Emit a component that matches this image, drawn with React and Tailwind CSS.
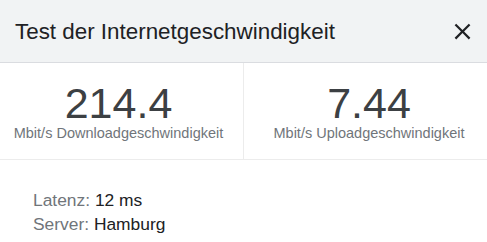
export default function App() {
  return (
    <div
      className="w-[487px] h-[242px] bg-white overflow-hidden"
      style={{ fontFamily: '"Liberation Sans", Arial, sans-serif' }}
    >
      <header className="h-[63px] flex items-center justify-between bg-[#f1f3f4] border-b border-[#dadce0] pl-[15px] pr-[5px]">
        <h1 className="text-[22.4px] leading-none text-[#202124] mt-[2px]">
          Test der Internetgeschwindigkeit
        </h1>
        <button className="w-[40px] h-[40px] flex items-center justify-center text-[#202124]">
          <svg width="27" height="27" viewBox="0 0 24 24" fill="currentColor">
            <path d="M19 6.41L17.59 5 12 10.59 6.41 5 5 6.41 10.59 12 5 17.59 6.41 19 12 13.41 17.59 19 19 17.59 13.41 12z" />
          </svg>
        </button>
      </header>

      <div className="flex border-b border-[#ececec]">
        <div className="w-[244px] flex flex-col items-center pt-[19px] pb-[17px] pr-[6px] border-r border-[#ececec]">
          <div className="text-[43px] leading-[42px] text-[#3c4043]">214.4</div>
          <div className="text-[14.5px] leading-[17px] mt-[1px] text-[#70757a]">
            Mbit/s Downloadgeschwindigkeit
          </div>
        </div>
        <div className="flex-1 flex flex-col items-center pt-[19px] pb-[17px] pl-[7px]">
          <div className="text-[43px] leading-[42px] text-[#3c4043]">7.44</div>
          <div className="text-[14.5px] leading-[17px] mt-[1px] text-[#70757a]">
            Mbit/s Uploadgeschwindigkeit
          </div>
        </div>
      </div>

      <div className="pl-[33px] pt-[28px] text-[17.4px] leading-[24px]">
        <div>
          <span className="text-[#70757a]">Latenz: </span>
          <span className="text-[#202124]">12 ms</span>
        </div>
        <div>
          <span className="text-[#70757a]">Server: </span>
          <span className="text-[#202124]">Hamburg</span>
        </div>
      </div>
    </div>
  );
}
